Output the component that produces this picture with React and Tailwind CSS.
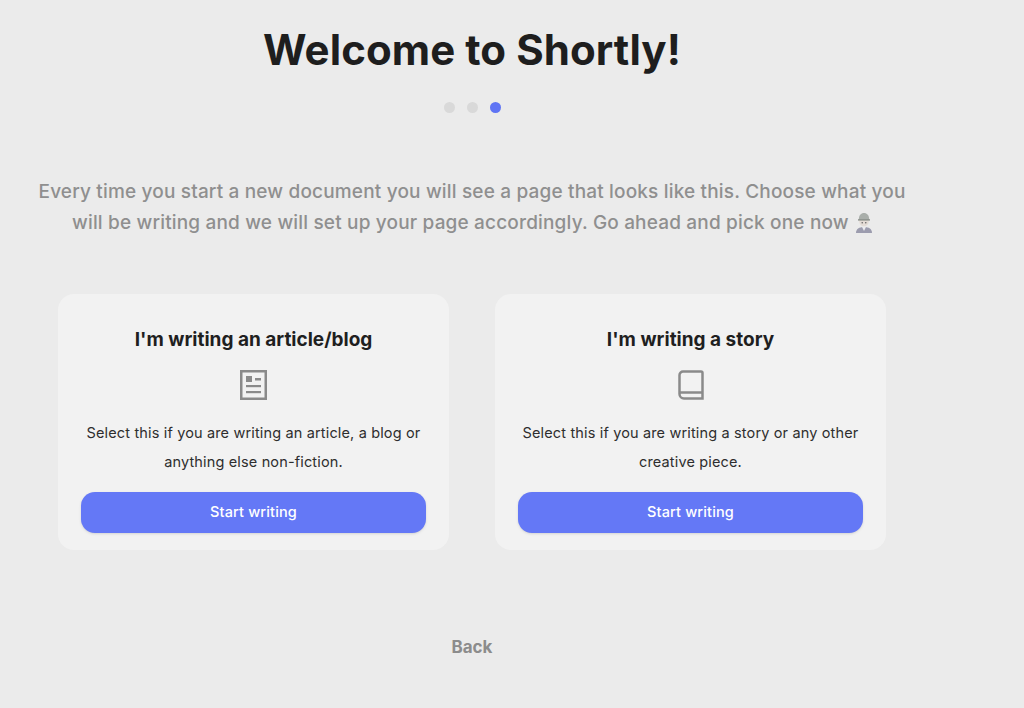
import React from "react";

const FONT = "font-['Inter','Lato',sans-serif]";

const ArticleIcon = () => (
  <svg width="27" height="30" viewBox="0 0 27 30" fill="none">
    <rect x="1.250" y="1.250" width="24.500" height="27.500" stroke="#8a8a8a" strokeWidth="2.500" />
    <rect x="6" y="6" width="6" height="6" fill="#8a8a8a" />
    <rect x="15" y="8" width="6" height="2.500" fill="#8a8a8a" />
    <rect x="6" y="15" width="15" height="2.200" fill="#8a8a8a" />
    <rect x="6" y="21" width="15" height="2.200" fill="#8a8a8a" />
  </svg>
);

const BookIcon = () => (
  <svg width="26" height="30" viewBox="0 0 26 30" fill="none" stroke="#8a8a8a" strokeWidth="2.500">
    <path d="M5 1.500h18a1.500 1.500 0 0 1 1.500 1.500v25.500H6a4.500 4.500 0 0 1-4.500-4.500V5A3.500 3.500 0 0 1 5 1.500z" />
    <path d="M1.500 22.500h23" />
  </svg>
);

// worker emoji at the end of the intro text
const WorkerEmoji = () => (
  <svg width="16" height="21" viewBox="0 0 16 21" className="inline-block align-[-4px] ml-[2px]">
    <path d="M0 21c0-4 3-6 8-6s8 2 8 6z" fill="#9c9cae" />
    <path d="M6 15h4l-2 4z" fill="#ececf0" />
    <circle cx="8" cy="9.500" r="4.800" fill="#e4dcd6" />
    <path d="M2.800 8C2.800 3 5 1 8 1s5.200 2 5.200 7z" fill="#a9aeaa" />
    <rect x="2" y="7.200" width="12" height="1.400" fill="#8b908a" />
    <circle cx="6.200" cy="10.800" r=".7" fill="#555" />
    <circle cx="9.800" cy="10.800" r=".7" fill="#555" />
  </svg>
);

const Card = ({ title, icon, lines }) => (
  <div className="w-[391px] h-[256px] rounded-2xl bg-[#f2f2f2] flex flex-col items-center px-[23px] pt-[32px]">
    <h2 className="text-[19px] leading-[28px] font-bold text-[#1f1f1f] whitespace-nowrap">{title}</h2>
    <div className="h-[30px] mt-[16px] flex items-center">{icon}</div>
    <p className="mt-[18px] text-[14.500px] leading-[29px] tracking-[0.15px] text-[#2e2e2e] text-center whitespace-nowrap">
      {lines[0]}
      <br />
      {lines[1]}
    </p>
    <button className="mt-[16px] w-[345px] h-[41px] pb-[1px] rounded-[14px] bg-[#6478f6] text-white text-[14.500px] tracking-[0.15px] font-medium shadow-sm">
      Start writing
    </button>
  </div>
);

export default function App() {
  return (
    <div className={`${FONT} w-[1024px] h-[708px] overflow-hidden bg-[#ebebeb]`}>
      <div className="w-[944px] flex flex-col items-center">
        <h1 className="mt-[23px] text-[42px] leading-[54px] font-bold tracking-[0.08px] text-[#1e1e1e] whitespace-nowrap">
          Welcome to Shortly!
        </h1>
        <div className="mt-[25px] flex gap-[12px]">
          <span className="w-[11px] h-[11px] rounded-full bg-[#d9d9d9]" />
          <span className="w-[11px] h-[11px] rounded-full bg-[#d9d9d9]" />
          <span className="w-[11px] h-[11px] rounded-full bg-[#5f74f4]" />
        </div>
        <p className="mt-[63px] text-[19px] leading-[31px] tracking-[0.17px] font-medium text-[#8f8f8f] text-center whitespace-nowrap">
          Every time you start a new document you will see a page that looks like this. Choose what you
          <br />
          will be writing and we will set up your page accordingly. Go ahead and pick one now <WorkerEmoji />
        </p>
        <div className="mt-[56px] flex gap-[46px]">
          <Card
            title="I'm writing an article/blog"
            icon={<ArticleIcon />}
            lines={["Select this if you are writing an article, a blog or", "anything else non-fiction."]}
          />
          <Card
            title="I'm writing a story"
            icon={<BookIcon />}
            lines={["Select this if you are writing a story or any other", "creative piece."]}
          />
        </div>
        <button className="mt-[85px] text-[17px] leading-[24px] font-bold text-[#8c8c8c]">Back</button>
      </div>
    </div>
  );
}
